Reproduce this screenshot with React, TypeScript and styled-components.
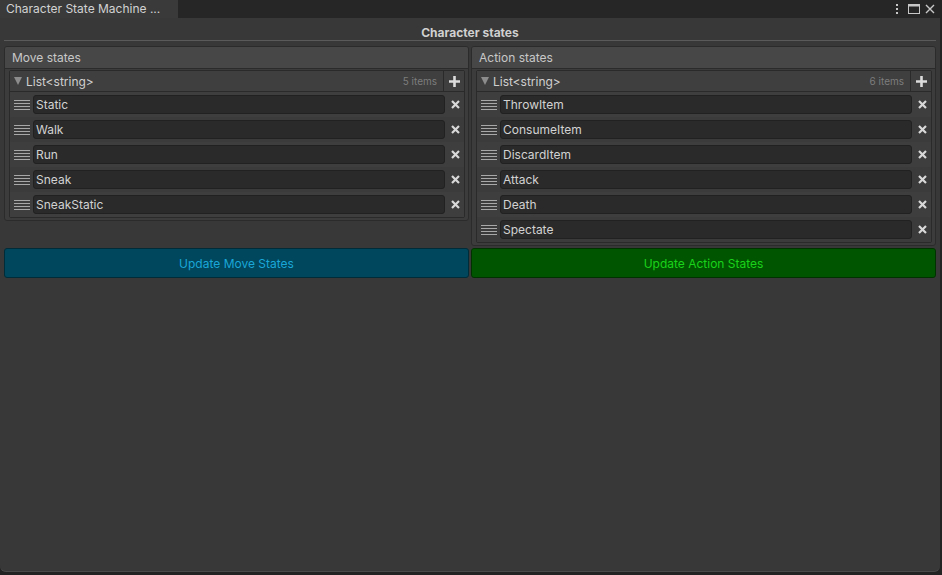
import React from "react";
import styled, { createGlobalStyle } from "styled-components";

const Global = createGlobalStyle`
  html, body { margin: 0; padding: 0; background: #232323; }
  body { font-family: Inter, "Noto Sans", sans-serif; font-size: 12px; color: #c4c4c4; }
  * { box-sizing: border-box; }
`;

const Window = styled.div`
  width: 940px;
  height: 572px;
  display: flex;
  flex-direction: column;
  background: #383838;
  border-radius: 0 0 6px 6px;
  border-bottom: 1px solid #4a4a4a;
  overflow: hidden;
`;

const TabBar = styled.div`
  height: 18px;
  display: flex;
  align-items: stretch;
  background: #262626;
`;

const Tab = styled.div`
  width: 178px;
  background: #3a3a3a;
  padding-left: 6px;
  line-height: 18px;
  font-size: 12px;
  color: #d2d2d2;
  white-space: nowrap;
`;

const TabIcons = styled.div`
  margin-left: auto;
  display: flex;
  align-items: center;
  gap: 5px;
  padding-right: 5px;
`;

const Kebab = styled.svg`
  margin-right: 4px;
`;

const Body = styled.div`
  flex: 1;
  padding: 0 4px;
  display: flex;
  flex-direction: column;
`;

const Title = styled.div`
  height: 23px;
  padding-top: 8px;
  text-align: center;
  font-weight: 700;
  font-size: 12px;
  line-height: 14px;
  color: #d0d0d0;
  border-bottom: 1px solid #5a5a5a;
`;

const Columns = styled.div`
  margin-top: 5px;
  display: grid;
  grid-template-columns: 1fr 1fr;
  gap: 2px;
  align-items: start;
`;

const Section = styled.div`
  border: 1px solid #2b2b2b;
  border-radius: 3px;
  background: #3c3c3c;
  overflow: hidden;
`;

const SectionHeader = styled.div`
  height: 22px;
  background: #474747;
  border-bottom: 1px solid #2b2b2b;
  padding-left: 7px;
  line-height: 21px;
  color: #c8c8c8;
`;

const SectionBody = styled.div`
  padding: 1px 3px 2px 4px;
`;

const List = styled.div`
  border: 1px solid #2a2a2a;
  border-radius: 2px;
`;

const ListHeader = styled.div`
  height: 21px;
  display: flex;
  align-items: center;
  background: #3f3f3f;
  border-bottom: 1px solid #2a2a2a;
`;

const Triangle = styled.span`
  width: 0;
  height: 0;
  margin: 0 4px 0 4px;
  border-left: 4px solid transparent;
  border-right: 4px solid transparent;
  border-top: 8px solid #8c8c8c;
`;

const ListTitle = styled.span`
  color: #d0d0d0;
  flex: 1;
`;

const Count = styled.span`
  font-size: 10px;
  color: #7d7d7d;
  padding-right: 6px;
`;

const AddBtn = styled.div`
  width: 21px;
  height: 20px;
  border-left: 1px solid #2a2a2a;
  display: flex;
  align-items: center;
  justify-content: center;
`;

const Row = styled.div<{ $alt: boolean }>`
  height: 25px;
  display: flex;
  align-items: center;
  background: ${(p) => (p.$alt ? "#3b3b3b" : "#3e3e3e")};
`;

const Handle = styled.div`
  width: 23px;
  display: flex;
  justify-content: center;
  padding-left: 1px;
`;

const Field = styled.div`
  flex: 1;
  height: 19px;
  background: #2a2a2a;
  border: 1px solid #212121;
  border-radius: 3px;
  padding-left: 2px;
  line-height: 17px;
  color: #d2d2d2;
`;

const RemoveBtn = styled.div`
  width: 19px;
  display: flex;
  justify-content: center;
  padding-left: 1px;
`;

const Buttons = styled.div`
  margin-top: 2px;
  display: grid;
  grid-template-columns: 1fr 1fr;
  gap: 2px;
`;

const ActionButton = styled.div<{ $bg: string; $fg: string; $border: string }>`
  height: 30px;
  border-radius: 3px;
  background: ${(p) => p.$bg};
  color: ${(p) => p.$fg};
  border: 1px solid ${(p) => p.$border};
  display: flex;
  align-items: center;
  justify-content: center;
  font-size: 12px;
`;

const HandleIcon = () => (
  <svg width="16" height="10" viewBox="0 0 16 10">
    {[0.5, 3.5, 6.5, 9.5].map((y) => (
      <line key={y} x1="0" x2="16" y1={y} y2={y} stroke="#a8a8a8" strokeWidth="1" />
    ))}
  </svg>
);

const XIcon = () => (
  <svg width="9" height="9" viewBox="0 0 9 9">
    <path d="M1 1 L8 8 M8 1 L1 8" stroke="#d8d8d8" strokeWidth="2.2" strokeLinecap="butt" />
  </svg>
);

const PlusIcon = () => (
  <svg width="11" height="11" viewBox="0 0 11 11">
    <path d="M5.5 0 V11 M0 5.5 H11" stroke="#dcdcdc" strokeWidth="2.6" />
  </svg>
);

const StateList = ({ title, items }: { title: string; items: string[] }) => (
  <Section>
    <SectionHeader>{title}</SectionHeader>
    <SectionBody>
      <List>
        <ListHeader>
          <Triangle />
          <ListTitle>List&lt;string&gt;</ListTitle>
          <Count>{items.length} items</Count>
          <AddBtn>
            <PlusIcon />
          </AddBtn>
        </ListHeader>
        {items.map((it, i) => (
          <Row key={it} $alt={i % 2 === 1}>
            <Handle>
              <HandleIcon />
            </Handle>
            <Field>{it}</Field>
            <RemoveBtn>
              <XIcon />
            </RemoveBtn>
          </Row>
        ))}
      </List>
    </SectionBody>
  </Section>
);

export default function App() {
  return (
    <>
      <Global />
      <Window>
        <TabBar>
          <Tab>Character State Machine ...</Tab>
          <TabIcons>
            <Kebab width="4" height="12" viewBox="0 0 4 12">
              <rect x="1" y="1" width="2" height="2" fill="#c8c8c8" />
              <rect x="1" y="5" width="2" height="2" fill="#c8c8c8" />
              <rect x="1" y="9" width="2" height="2" fill="#c8c8c8" />
            </Kebab>
            <svg width="12" height="10" viewBox="0 0 12 10">
              <rect x="0.5" y="0.5" width="11" height="9" fill="none" stroke="#c8c8c8" />
              <rect x="0.5" y="0.5" width="11" height="2" fill="#c8c8c8" />
            </svg>
            <svg width="10" height="10" viewBox="0 0 10 10">
              <path d="M1 1 L9 9 M9 1 L1 9" stroke="#c8c8c8" strokeWidth="1.4" />
            </svg>
          </TabIcons>
        </TabBar>
        <Body>
          <Title>Character states</Title>
          <Columns>
            <StateList title="Move states" items={["Static", "Walk", "Run", "Sneak", "SneakStatic"]} />
            <StateList
              title="Action states"
              items={["ThrowItem", "ConsumeItem", "DiscardItem", "Attack", "Death", "Spectate"]}
            />
          </Columns>
          <Buttons>
            <ActionButton $bg="#00465c" $fg="#1aa7d8" $border="#002c3a">
              Update Move States
            </ActionButton>
            <ActionButton $bg="#005600" $fg="#1ad21a" $border="#003200">
              Update Action States
            </ActionButton>
          </Buttons>
        </Body>
      </Window>
    </>
  );
}
